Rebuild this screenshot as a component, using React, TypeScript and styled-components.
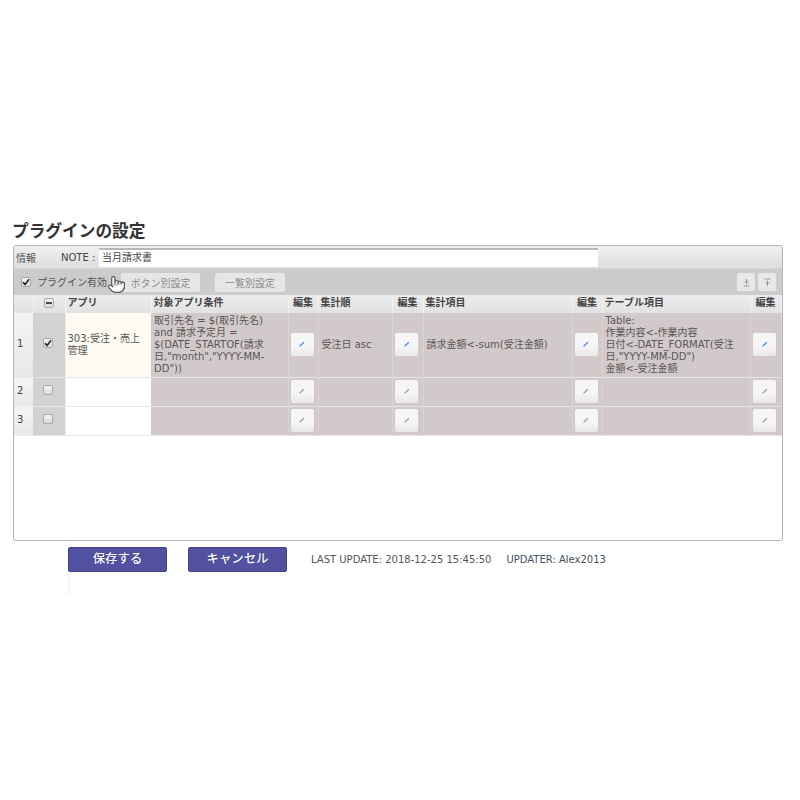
import { Fragment } from "react";
import styled, { createGlobalStyle } from "styled-components";
import { Pointer } from "lucide-react";

const GlobalStyle = createGlobalStyle`
  html, body {
    margin: 0;
    padding: 0;
    background: #fff;
  }
  body {
    font-family: "DejaVu Sans", "Noto Sans CJK JP", sans-serif;
    font-size: 10px;
    color: #555;
  }
`;

const Page = styled.div`
  width: 800px;
  height: 800px;
  padding: 221px 0 0 13px;
  box-sizing: border-box;
`;

const Title = styled.h1`
  margin: 0 0 3px -1px;
  font-size: 16.7px;
  line-height: 21px;
  font-weight: 700;
  color: #333;
`;

const Panel = styled.div`
  width: 770px;
  height: 296px;
  box-sizing: border-box;
  border: 1px solid #b4b4b4;
  border-radius: 3px;
  overflow: hidden;
`;

const InfoRow = styled.div`
  height: 23px;
  display: flex;
  align-items: center;
  padding-left: 2px;
  box-sizing: border-box;
  background: linear-gradient(#f0f0f0, #dedede);
  border-bottom: 1px solid #d8d8d8;
`;

const InfoLabel = styled.span`
  width: 45px;
`;

const NoteLabel = styled.span`
  width: 38px;
  color: #444;
`;

const NoteInput = styled.div`
  width: 499px;
  height: 19px;
  margin-top: 1px;
  padding-left: 3px;
  box-sizing: border-box;
  background: #fff;
  border-top: 2px solid #b8b8b8;
  line-height: 16px;
  color: #444;
`;

const Toolbar = styled.div`
  position: relative;
  height: 26px;
  display: flex;
  align-items: center;
  background: #cccccc;
`;

const ToolCheck = styled.span`
  display: flex;
  margin: 0 6px 1px 7px;
`;

const PluginLabel = styled.span`
  width: 84px;
  margin-bottom: 2px;
`;

const ModeButton = styled.button<{ $width: number; $gap: number }>`
  width: ${(p) => p.$width}px;
  height: 19px;
  margin-right: ${(p) => p.$gap}px;
  margin-top: 1px;
  padding: 0;
  border: 0;
  border-radius: 2px;
  background: #e6e6e6;
  color: #8a8a8a;
  font: inherit;
`;

const MoveGroup = styled.div`
  display: flex;
  gap: 3px;
  margin: 0 6px 0 auto;
`;

const MoveButton = styled.button`
  width: 18px;
  height: 18px;
  padding: 0;
  display: flex;
  align-items: center;
  justify-content: center;
  border: 0;
  border-radius: 2px;
  background: #e8e8e8;
`;

const HandCursor = styled.span`
  position: absolute;
  left: 93px;
  top: 6px;
  display: flex;
  filter: drop-shadow(0 0 0.5px #888);
`;

const Grid = styled.table`
  width: 767px;
  table-layout: fixed;
  border-collapse: collapse;
  line-height: 12px;
`;

const HeadCell = styled.th<{ $center?: boolean }>`
  height: 18px;
  padding: 0 0 2px ${(p) => (p.$center ? 0 : 2)}px;
  box-sizing: border-box;
  text-align: ${(p) => (p.$center ? "center" : "left")};
  font-weight: 700;
  font-size: 10px;
  color: #444;
  background: linear-gradient(#ececec, #e2e2e2);
  border-right: 1px solid #f2f2f2;
`;

const Row = styled.tr<{ $height: number }>`
  height: ${(p) => p.$height}px;
  border-bottom: 1px solid #e6e6e6;
`;

const NumCell = styled.td`
  padding: 0 0 2px 3px;
  background: linear-gradient(#f4f4f4, #e8e8e8);
  color: #444;
`;

const CheckCell = styled.td`
  padding: 0 2px 4px 0;
  background: #d2d2d2;
  border-right: 1px solid #ececec;
`;

const CheckWrap = styled.div`
  display: flex;
  justify-content: center;
`;

const AppCell = styled.td<{ $filled: boolean }>`
  padding: 0 2px;
  background: ${(p) => (p.$filled ? "#fdfbf1" : "#fff")};
  color: #555;
`;

const BodyCell = styled.td`
  padding: 0 3px;
  background: #d2caca;
  border-right: 1px solid #dad4d4;
  color: #5a5555;
  white-space: pre-line;
`;

const EditCell = styled(BodyCell)`
  padding: 0 2px 1px 0;
`;

const EditButton = styled.button`
  width: 23px;
  height: 23px;
  margin: 0 auto;
  padding: 0;
  display: flex;
  align-items: center;
  justify-content: center;
  border: 0;
  border-radius: 2px;
  background: linear-gradient(#f6f6f6 55%, #e8e8e8);
`;

const Box = styled.span`
  width: 10px;
  height: 10px;
  display: flex;
  align-items: center;
  justify-content: center;
  box-sizing: border-box;
  border: 1px solid #a8a8a8;
  border-radius: 2px;
  background: linear-gradient(#f2f2f2, #dcdcdc);
`;

const Footer = styled.div`
  height: 54px;
  margin: 0 0 0 55px;
  padding-top: 6px;
  box-sizing: border-box;
  display: flex;
  align-items: flex-start;
  background: linear-gradient(90deg, #f6f6f6 2px, transparent 2px);
`;

const SaveButton = styled.button`
  width: 99px;
  height: 25px;
  margin-right: 21px;
  padding: 0 0 3px;
  border: 1px solid #45438c;
  border-radius: 2px;
  background: #5351a2;
  color: #fff;
  font: 500 12.4px "DejaVu Sans", "Noto Sans CJK JP", sans-serif;
  text-shadow: 0 0 1px #2c2b66;
`;

const FooterText = styled.span`
  margin: 7px 15px 0 3px;
  font-size: 10px;
  line-height: 12px;
  color: #555;
`;

const Updater = styled(FooterText)`
  margin-left: 0;
  color: #44505c;
`;

const widths = [19, 32, 86, 137, 30, 74, 31, 149, 30, 148, 31];

const headers = ["アプリ", "対象アプリ条件", "編集", "集計順", "編集", "集計項目", "編集", "テーブル項目", "編集"];

interface IRule {
  app: string;
  condition: string;
  order: string;
  items: string;
  table: string;
}

const rules: IRule[] = [
  {
    app: "303:受注・売上管理",
    condition: '取引先名 = $(取引先名)\nand 請求予定月 =\n$(DATE_STARTOF(請求\n日,"month","YYYY-MM-\nDD"))',
    order: "受注日 asc",
    items: "請求金額<-sum(受注金額)",
    table: 'Table:\n作業内容<-作業内容\n日付<-DATE_FORMAT(受注\n日,"YYYY-MM-DD")\n金額<-受注金額',
  },
  { app: "", condition: "", order: "", items: "", table: "" },
  { app: "", condition: "", order: "", items: "", table: "" },
];

const Check = () => (
  <svg width="8" height="8" viewBox="0 0 8 8">
    <path d="M1 4.2 L3.1 6.4 L7 1.2" fill="none" stroke="#222" strokeWidth="1.6" />
  </svg>
);

const Minus = () => (
  <svg width="8" height="8" viewBox="0 0 8 8">
    <path d="M1 4 H7" fill="none" stroke="#222" strokeWidth="1.6" />
  </svg>
);

const Pencil = ({ active }: { active: boolean }) => (
  <svg width="8" height="8" viewBox="0 0 8 8">
    <path d="M1.6 6.4 L5.8 2.2" fill="none" stroke={active ? "#3b86ee" : "#9a9a9a"} strokeWidth="1.3" />
  </svg>
);

const MoveIcon = ({ down }: { down?: boolean }) => (
  <svg width="9" height="9" viewBox="0 0 9 9">
    <path
      d={down ? "M1.5 1 H7.5 M4.5 2.5 V8 M2.5 5 H6.5" : "M1.5 8 H7.5 M4.5 1 V6.5 M2.5 4 H6.5"}
      fill="none"
      stroke="#999"
      strokeWidth="1"
    />
  </svg>
);

const App = () => {
  return (
    <>
      <GlobalStyle />
      <Page>
        <Title>プラグインの設定</Title>
        <Panel>
          <InfoRow>
            <InfoLabel>情報</InfoLabel>
            <NoteLabel>NOTE :</NoteLabel>
            <NoteInput>当月請求書</NoteInput>
          </InfoRow>
          <Toolbar>
            <ToolCheck>
              <Box>
                <Check />
              </Box>
            </ToolCheck>
            <PluginLabel>プラグイン有効</PluginLabel>
            <ModeButton $width={79} $gap={15}>ボタン別設定</ModeButton>
            <ModeButton $width={70} $gap={0}>一覧別設定</ModeButton>
            <MoveGroup>
              <MoveButton>
                <MoveIcon />
              </MoveButton>
              <MoveButton>
                <MoveIcon down />
              </MoveButton>
            </MoveGroup>
            <HandCursor>
              <Pointer size={19} fill="#fff" color="#555" strokeWidth={1.4} />
            </HandCursor>
          </Toolbar>
          <Grid>
            <colgroup>
              {widths.map((w, i) => (
                <col key={i} width={w} />
              ))}
            </colgroup>
            <thead>
              <tr>
                <HeadCell />
                <HeadCell $center>
                  <CheckWrap>
                    <Box>
                      <Minus />
                    </Box>
                  </CheckWrap>
                </HeadCell>
                {headers.map((h, i) => (
                  <HeadCell key={i} $center={h === "編集"}>
                    {h}
                  </HeadCell>
                ))}
              </tr>
            </thead>
            <tbody>
              {rules.map((rule, i) => {
                const active = i === 0;
                const edit = (
                  <EditCell>
                    <EditButton>
                      <Pencil active={active} />
                    </EditButton>
                  </EditCell>
                );
                return (
                  <Row key={i} $height={active ? 64 : 29}>
                    <NumCell>{i + 1}</NumCell>
                    <CheckCell>
                      <CheckWrap>
                        <Box>{active && <Check />}</Box>
                      </CheckWrap>
                    </CheckCell>
                    <AppCell $filled={active}>{rule.app}</AppCell>
                    <BodyCell>{rule.condition}</BodyCell>
                    <Fragment>{edit}</Fragment>
                    <BodyCell>{rule.order}</BodyCell>
                    <Fragment>{edit}</Fragment>
                    <BodyCell>{rule.items}</BodyCell>
                    <Fragment>{edit}</Fragment>
                    <BodyCell>{rule.table}</BodyCell>
                    <Fragment>{edit}</Fragment>
                  </Row>
                );
              })}
            </tbody>
          </Grid>
        </Panel>
        <Footer>
          <SaveButton>保存する</SaveButton>
          <SaveButton>キャンセル</SaveButton>
          <FooterText>LAST UPDATE: 2018-12-25 15:45:50</FooterText>
          <Updater>UPDATER: Alex2013</Updater>
        </Footer>
      </Page>
    </>
  );
};

export default App;
